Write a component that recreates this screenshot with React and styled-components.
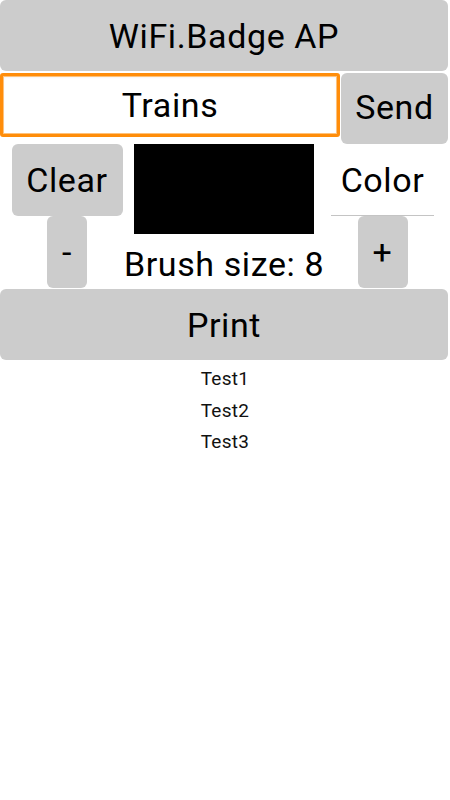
import React, { useState } from "react";
import styled, { createGlobalStyle } from "styled-components";

const GlobalStyle = createGlobalStyle`
  body {
    margin: 0;
    background: #ffffff;
    font-family: Roboto, "Liberation Sans", sans-serif;
    color: #000000;
  }
`;

const Page = styled.div`
  width: 450px;
  min-height: 800px;
  background: #ffffff;
`;

const Button = styled.button`
  display: flex;
  align-items: center;
  justify-content: center;
  padding: 0;
  border: none;
  border-radius: 6px;
  background: #cccccc;
  color: #000000;
  font-family: Roboto, "Liberation Sans", sans-serif;
  font-size: 34px;
  letter-spacing: 0.6px;
  line-height: 1;
  cursor: pointer;
`;

const WideButton = styled(Button)`
  width: 448px;
  height: 71px;
`;

const InputRow = styled.div`
  display: flex;
  align-items: flex-start;
  gap: 1px;
  margin-top: 2px;
  width: 448px;
`;

const TextField = styled.input`
  box-sizing: border-box;
  width: 340px;
  height: 64px;
  margin: 0;
  padding: 0 0 1px;
  border: 3px solid #ff8d0a;
  border-radius: 3px;
  box-shadow: inset 0 0 0 1px #ffc27a, inset 0 1px 3px rgba(0, 0, 0, 0.08);
  background: #ffffff;
  outline: none;
  text-align: center;
  font-family: Roboto, "Liberation Sans", sans-serif;
  font-size: 34px;
  letter-spacing: 0.6px;
  color: #000000;
`;

const SendButton = styled(Button)`
  flex: 1;
  height: 71px;
  padding-bottom: 3px;
`;

const Controls = styled.div`
  display: grid;
  grid-template-columns: 134px 180px 1fr;
  width: 450px;
`;

const Column = styled.div`
  display: flex;
  flex-direction: column;
  align-items: center;
`;

const ClearButton = styled(Button)`
  width: 111px;
  height: 72px;
`;

const StepButton = styled(Button)`
  width: ${(p) => p.$w}px;
  height: 72px;
  margin-left: ${(p) => p.$shift || 0}px;
`;

const Canvas = styled.div`
  width: 180px;
  height: 90px;
  background: #000000;
`;

const SizeLabel = styled.div`
  margin-top: 5px;
  line-height: 50px;
  font-size: 34px;
  letter-spacing: 0.6px;
  white-space: nowrap;
`;

const ColorField = styled.div`
  box-sizing: border-box;
  display: flex;
  align-items: center;
  justify-content: center;
  width: 103px;
  height: 72px;
  margin-left: 1px;
  border-bottom: 1px solid #c4c4c4;
  font-size: 34px;
  letter-spacing: 0.6px;
`;

const List = styled.ul`
  list-style: none;
  margin: 0;
  padding: 3px 0 0;
  width: 450px;
`;

const ListItem = styled.li`
  text-align: center;
  font-size: 19px;
  letter-spacing: 0.3px;
  line-height: 31.5px;
  color: #111111;
`;

const items = ["Test1", "Test2", "Test3"];

export default function App() {
  const [text, setText] = useState("Trains");
  const [brush, setBrush] = useState(8);

  return (
    <Page>
      <GlobalStyle />
      <WideButton>WiFi.Badge AP</WideButton>
      <InputRow>
        <TextField value={text} onChange={(e) => setText(e.target.value)} />
        <SendButton>Send</SendButton>
      </InputRow>
      <Controls>
        <Column>
          <ClearButton>Clear</ClearButton>
          <StepButton $w={40} onClick={() => setBrush(brush - 1)}>
            -
          </StepButton>
        </Column>
        <Column>
          <Canvas />
          <SizeLabel>Brush size: {brush}</SizeLabel>
        </Column>
        <Column>
          <ColorField>Color</ColorField>
          <StepButton $w={50} $shift={1} onClick={() => setBrush(brush + 1)}>
            +
          </StepButton>
        </Column>
      </Controls>
      <WideButton>Print</WideButton>
      <List>
        {items.map((t) => (
          <ListItem key={t}>{t}</ListItem>
        ))}
      </List>
    </Page>
  );
}
